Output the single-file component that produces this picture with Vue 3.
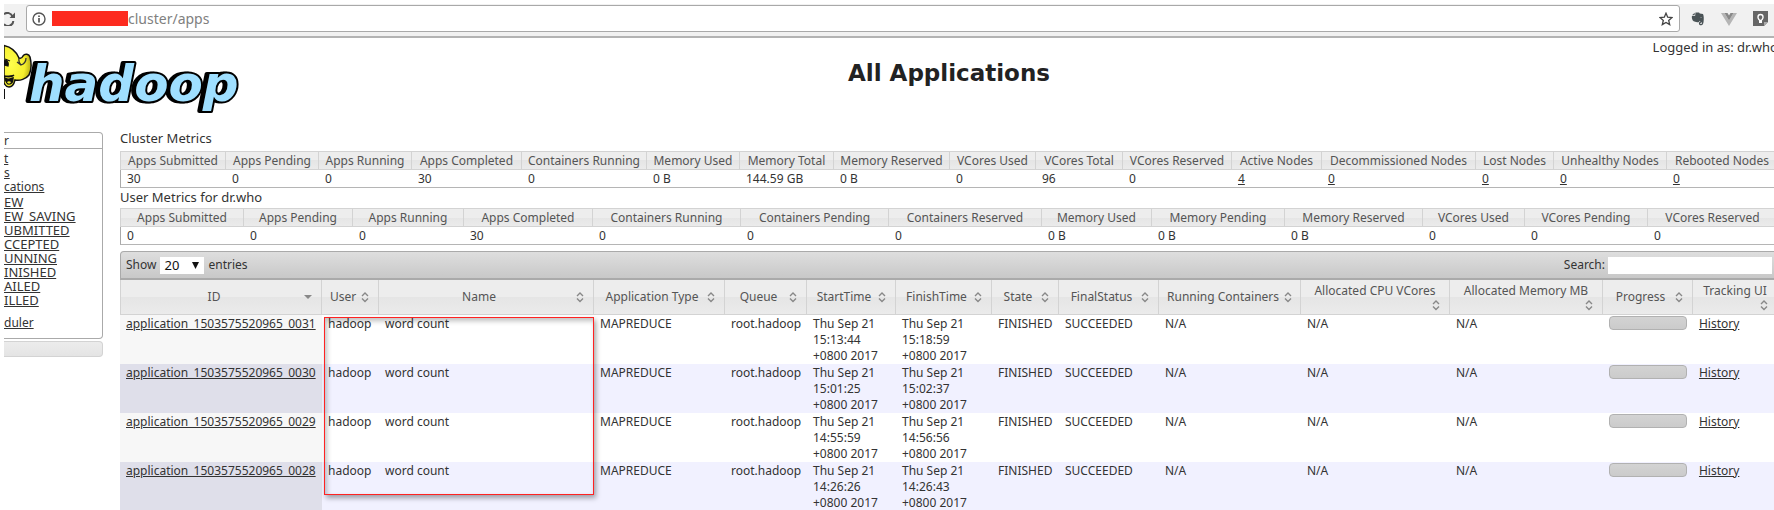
<script setup>
import { ref } from 'vue'

const address = ref('cluster/apps')
const pageSize = ref('20')
const search = ref('')

const nav = [
  { id: 'about', text: 't', kind: 'main' },
  { id: 'nodes', text: 's', kind: 'main' },
  { id: 'apps', text: 'cations', kind: 'main' },
  { id: 'new', text: 'EW', kind: 'state' },
  { id: 'saving', text: 'EW_SAVING', kind: 'state' },
  { id: 'submitted', text: 'UBMITTED', kind: 'state' },
  { id: 'accepted', text: 'CCEPTED', kind: 'state' },
  { id: 'running', text: 'UNNING', kind: 'state' },
  { id: 'finished', text: 'INISHED', kind: 'state' },
  { id: 'failed', text: 'AILED', kind: 'state' },
  { id: 'killed', text: 'ILLED', kind: 'state' },
  { id: 'scheduler', text: 'duler', kind: 'last' },
]

const metrics = [
  {
    title: 'Cluster Metrics',
    columns: [
      ['Apps Submitted', '30', 106],
      ['Apps Pending', '0', 93],
      ['Apps Running', '0', 93],
      ['Apps Completed', '30', 110],
      ['Containers Running', '0', 125],
      ['Memory Used', '0 B', 93],
      ['Memory Total', '144.59 GB', 94],
      ['Memory Reserved', '0 B', 116],
      ['VCores Used', '0', 86],
      ['VCores Total', '96', 87],
      ['VCores Reserved', '0', 109],
      ['Active Nodes', '4', 90, true],
      ['Decommissioned Nodes', '0', 154, true],
      ['Lost Nodes', '0', 78, true],
      ['Unhealthy Nodes', '0', 113, true],
      ['Rebooted Nodes', '0', 111, true],
    ],
  },
  {
    title: 'User Metrics for dr.who',
    columns: [
      ['Apps Submitted', '0', 124],
      ['Apps Pending', '0', 109],
      ['Apps Running', '0', 111],
      ['Apps Completed', '30', 129],
      ['Containers Running', '0', 148],
      ['Containers Pending', '0', 148],
      ['Containers Reserved', '0', 153],
      ['Memory Used', '0 B', 110],
      ['Memory Pending', '0 B', 133],
      ['Memory Reserved', '0 B', 138],
      ['VCores Used', '0', 102],
      ['VCores Pending', '0', 123],
      ['VCores Reserved', '0', 130],
    ],
  },
]

const columns = [
  { label: 'ID', width: 202, sorted: true },
  { label: 'User', width: 57 },
  { label: 'Name', width: 215 },
  { label: 'Application Type', width: 131 },
  { label: 'Queue', width: 82 },
  { label: 'StartTime', width: 89 },
  { label: 'FinishTime', width: 96 },
  { label: 'State', width: 67 },
  { label: 'FinalStatus', width: 100 },
  { label: 'Running Containers', width: 142 },
  { label: 'Allocated CPU VCores', width: 149, stacked: true },
  { label: 'Allocated Memory MB', width: 153, stacked: true },
  { label: 'Progress', width: 90 },
  { label: 'Tracking UI', width: 85, stacked: true },
]

const apps = [
  { id: 'application_1503575520965_0031', start: '15:13:44', finish: '15:18:59' },
  { id: 'application_1503575520965_0030', start: '15:01:25', finish: '15:02:37' },
  { id: 'application_1503575520965_0029', start: '14:55:59', finish: '14:56:56' },
  { id: 'application_1503575520965_0028', start: '14:26:26', finish: '14:26:43' },
]

const total = 1658
const share = (w) => ({ width: (w / total) * 100 + '%' })
</script>

<template>
  <div class="window">
    <div class="browser">
      <button class="reload" aria-label="Reload">
        <svg viewBox="0 0 12 14" width="12" height="14">
          <path d="M0 2.2A5.2 5.2 0 0 1 8.4 4.6M9.3 9A5.2 5.2 0 0 1 0 12" fill="none" stroke="#555" stroke-width="2" />
          <path d="M11 .5V6H5.5z" fill="#555" />
        </svg>
      </button>
      <div class="address">
        <svg viewBox="0 0 14 14" width="14" height="14">
          <circle cx="7" cy="7" r="6" fill="none" stroke="#555" stroke-width="1.4" />
          <path d="M7 6v4.4M7 3.4v1.7" stroke="#555" stroke-width="1.7" />
        </svg>
        <span class="redacted"></span>
        <input v-model="address" aria-label="Address" />
        <button aria-label="Bookmark">
          <svg viewBox="0 0 14 14" width="14" height="14">
            <path d="M7 1.2l1.7 4 4.3.4-3.3 2.8 1 4.2L7 10.4l-3.7 2.2 1-4.2L1 5.6l4.3-.4z" fill="none" stroke="#444" stroke-width="1.3" />
          </svg>
        </button>
      </div>
      <div class="extensions">
        <svg viewBox="0 0 14 14" width="14" height="14">
          <path d="M4.5.5h3.5l.8.9 3.2.6c.8 1.5 1 4.5.6 7.500-.2 2-.9 3.800-2.500 3.800-1.500 0-2.200-.6-2.200-2 0-1.200.8-1.600 2.200-1.600v1c-.7 0-1 .2-1 .6 0 .5.3.8.9.8.7 0 .9-.7.9-1.700-1.100-.3-1.900-.9-2.200-1.700-.4 1.200-1.200 1.700-2.600 1.500C3.300 9.900 1.500 9.200 1 6.500.8 5.300.8 4.300 1 3.900h3.100z" fill="#4a5356" />
          <path d="M1 3.200L3.700.7v2.500z" fill="#4a5356" />
          <path d="M9.400 5.900c.5-.6 1.200-.5 1.500.2z" fill="#eee" />
        </svg>
        <svg viewBox="0 0 16 14" width="16" height="14">
          <path d="M0 1h3.500L8 8.500 12.500 1H16L8 14z" fill="#b5b5b5" />
          <path d="M3.500 1h3L8 3.500 9.500 1h3L8 8.500z" fill="#888" />
        </svg>
        <svg viewBox="0 0 15 15" width="15" height="15">
          <path d="M0 0h15v11l-4 4H0z" fill="#666" />
          <path d="M11 15v-4h4z" fill="#aaa" />
          <path d="M6 9.500C4.800 8.300 4.300 7.500 4.300 6a3.200 3.200 0 0 1 6.400 0c0 1.500-.5 2.300-1.700 3.500V12H6z" fill="#fff" />
          <path d="M7 8.800C6 7.700 5.700 7 5.700 6a1.800 1.800 0 0 1 3.600 0c0 1-.3 1.700-1.300 2.800z" fill="#666" />
        </svg>
      </div>
    </div>

    <header class="banner">
      <svg class="logo" viewBox="0 0 240 80" width="240" height="80" role="img" aria-label="hadoop">
        <defs>
          <radialGradient id="skin" cx="25%" cy="45%" r="75%">
            <stop offset="0" stop-color="#ffff4d" />
            <stop offset=".7" stop-color="#f5ee2c" />
            <stop offset="1" stop-color="#b5ac16" />
          </radialGradient>
        </defs>
        <path d="M0 7.500C7 9 12 13 15 20c2 1 3 0 4-2 2-3 6-2 7 1 1.500 6 1.500 13-1 18-3 4-9 6-14 5-1 4-3 7-6 7-2 0-4-2-5-4z" fill="url(#skin)" stroke="#111" stroke-width="1.500" />
        <path d="M15 20c-.5 3 0 5 2 7M22 20c0 3-2 6-5 7l-4-3" fill="none" stroke="#333" stroke-width="1.300" />
        <path d="M1 21l5 2M0 23c3-1 5 1 4 5l-4-1z" fill="#111" stroke="#111" stroke-width="1.200" />
        <path d="M0 38c4 1 8 1 10-1M1 40c3 2 6 1 8 0 0 4-2 6-4 6s-3-2-4-6z" fill="#111" stroke="#111" stroke-width="1.500" />
        <path d="M3 44c1-1 3-1 4 0-1 2-3 2-4 0z" fill="#f5ee2c" />
        <path d="M0 51v10" stroke="#111" stroke-width="2" />
        <text class="wordmark" x="25" y="63">hadoop</text>
      </svg>
      <div class="heading">
        <p class="login">Logged in as: dr.who</p>
        <h1>All Applications</h1>
      </div>
    </header>

    <div class="layout">
      <aside>
        <nav>
          <h2>r</h2>
          <ul>
            <li v-for="n in nav" :key="n.id" :class="n.kind"><a href="#">{{ n.text }}</a></li>
          </ul>
        </nav>
        <div class="collapsed"></div>
      </aside>

      <main>
        <section v-for="m in metrics" :key="m.title" class="metrics">
          <table>
            <caption>{{ m.title }}</caption>
            <colgroup>
              <col v-for="c in m.columns" :key="c[0]" :style="share(c[2])" />
            </colgroup>
            <thead>
              <tr><th v-for="c in m.columns" :key="c[0]" scope="col">{{ c[0] }}</th></tr>
            </thead>
            <tbody>
              <tr>
                <td v-for="c in m.columns" :key="c[0]">
                  <a v-if="c[3]" href="#">{{ c[1] }}</a>
                  <template v-else>{{ c[1] }}</template>
                </td>
              </tr>
            </tbody>
          </table>
        </section>

        <section class="apps">
          <div class="controls">
            <label class="length">
              Show
              <span class="picker">
                <select v-model="pageSize">
                  <option>20</option>
                  <option>40</option>
                </select>
                <svg viewBox="0 0 7 7" width="7" height="7"><path d="M0 0h7L3.500 7z" fill="#111" /></svg>
              </span>
              entries
            </label>
            <label class="search">Search:<input v-model="search" type="text" /></label>
          </div>
          <table>
            <colgroup>
              <col v-for="c in columns" :key="c.label" :style="share(c.width)" />
            </colgroup>
            <thead>
              <tr>
                <th v-for="c in columns" :key="c.label" scope="col">
                  <div class="sorter" :class="{ stacked: c.stacked }">
                    <span>{{ c.label }}</span>
                    <svg viewBox="0 0 10 12" width="10" height="12">
                      <path v-if="c.sorted" d="M1 4h8L5 8z" fill="#888" />
                      <path v-else d="M2 5l3-3 3 3M2 7.500l3 3 3-3" fill="none" stroke="#888" stroke-width="1.400" />
                    </svg>
                  </div>
                </th>
              </tr>
            </thead>
            <tbody>
              <tr v-for="a in apps" :key="a.id">
                <td><a href="#">{{ a.id }}</a></td>
                <td>hadoop</td>
                <td>word count</td>
                <td>MAPREDUCE</td>
                <td>root.hadoop</td>
                <td>Thu Sep 21<br />{{ a.start }}<br />+0800 2017</td>
                <td>Thu Sep 21<br />{{ a.finish }}<br />+0800 2017</td>
                <td>FINISHED</td>
                <td>SUCCEEDED</td>
                <td>N/A</td>
                <td>N/A</td>
                <td>N/A</td>
                <td><div class="bar"></div></td>
                <td><a href="#">History</a></td>
              </tr>
            </tbody>
          </table>
          <div class="highlight"></div>
        </section>
      </main>
    </div>
  </div>
</template>

<style>
body {
  margin: 0;
  background: #fff;
  overflow: hidden;
}
</style>

<style scoped>
.window {
  padding: 4px 0 0 4px;
  overflow: hidden;
  font-family: "Noto Sans", "Open Sans", sans-serif;
  font-size: 12px;
  line-height: 16px;
  color: #333;
}
svg {
  display: block;
  flex: none;
}
button {
  padding: 0;
  border: 0;
  background: none;
}
a {
  color: #333;
  text-decoration: underline;
}
.browser {
  display: flex;
  align-items: center;
  padding: 1px 0 4px;
  background: #f1f1f1;
  border-bottom: 2px solid #b3b3b3;
}
.reload {
  width: 22px;
}
.address {
  flex: 1;
  display: flex;
  align-items: center;
  box-sizing: border-box;
  height: 27px;
  padding: 0 6px 0 5px;
  background: #fff;
  border: 1px solid #a9a9a9;
  border-radius: 3px;
}
.redacted {
  width: 76px;
  height: 15px;
  margin-left: 6px;
  background: #fd2b1f;
}
.address input {
  flex: 1;
  min-width: 0;
  padding: 0;
  border: 0;
  outline: 0;
  background: none;
  font: 14px/20px "Noto Sans", sans-serif;
  color: #808080;
}
.extensions {
  display: flex;
  align-items: center;
  gap: 16px;
  padding: 0 6px 0 11px;
}
.banner {
  display: grid;
  grid-template-columns: 116px 1fr;
  height: 82px;
}
.logo {
  overflow: hidden;
}
.wordmark {
  font: italic bold 50px "DejaVu Sans", Verdana, sans-serif;
  fill: #9fdfff;
  stroke: #000;
  stroke-width: 4px;
  stroke-linejoin: round;
  paint-order: stroke;
  filter: drop-shadow(-3px 0 0 #000);
}
.heading,
main {
  margin-right: -4px;
}
.login {
  margin: 0;
  text-align: right;
  font-size: 13px;
  line-height: 18px;
}
h1 {
  margin: 5px 0 0;
  text-align: center;
  font: bold 23px/24px "DejaVu Sans", Verdana, sans-serif;
  color: #222;
}
.layout {
  display: grid;
  grid-template-columns: 99px 1fr;
  column-gap: 17px;
  align-items: start;
}
aside {
  padding-top: 12px;
}
nav {
  border: 1px solid #aaa;
  border-left: 0;
  border-radius: 0 4px 4px 0;
}
h2 {
  margin: 0;
  border-bottom: 1px solid #aaa;
  font-size: 12px;
  font-weight: normal;
  line-height: 15px;
}
nav ul {
  margin: 0;
  padding: 3px 0 8px;
  list-style: none;
  line-height: 14px;
}
nav .state {
  font-size: 13px;
}
nav .main + .state {
  padding-top: 1px;
}
nav .last {
  padding-top: 9px;
}
.collapsed {
  height: 14px;
  margin-top: 2px;
  border: 1px solid #d3d3d3;
  border-left: 0;
  border-radius: 0 4px 4px 0;
  background: linear-gradient(#ececec, #e4e4e4);
}
table {
  width: 100%;
  table-layout: fixed;
  border-collapse: separate;
  border-spacing: 0;
}
th {
  box-sizing: border-box;
  padding: 0;
  border: 1px solid #d3d3d3;
  border-left-width: 0;
  background: linear-gradient(#ededed 50%, #e5e5e5 50%, #ebebeb);
  font-weight: normal;
  color: #555;
  white-space: nowrap;
}
th:first-child {
  border-left-width: 1px;
}
.metrics caption {
  height: 20px;
  text-align: left;
  font-size: 13px;
  line-height: 18px;
}
.metrics:first-child caption {
  padding: 9px 0 2px;
}
.metrics th {
  height: 19px;
}
.metrics td {
  box-sizing: border-box;
  height: 18px;
  padding: 1px 0 0 6px;
  border-bottom: 1px solid #b5b5b5;
}
.metrics td:first-child {
  border-left: 1px solid #aaa;
}
.apps {
  position: relative;
  margin-top: 6px;
}
.controls {
  display: flex;
  align-items: center;
  justify-content: space-between;
  box-sizing: border-box;
  height: 29px;
  padding: 0 5px;
  border: 1px solid #aaa;
  border-bottom-width: 2px;
  border-radius: 4px 4px 0 0;
  background: linear-gradient(#dedede, #c8c8c8);
}
.length,
.search {
  display: flex;
  align-items: center;
  gap: 3px;
}
.length {
  gap: 4px;
}
.picker {
  position: relative;
}
.picker select {
  display: block;
  appearance: none;
  width: 44px;
  height: 17px;
  padding: 0 0 0 4px;
  border: 0;
  border-radius: 0;
  background: #fff;
  font: 13px/17px "Noto Sans", sans-serif;
  color: #111;
}
.picker svg {
  position: absolute;
  top: 5px;
  right: 5px;
  pointer-events: none;
}
.search input {
  box-sizing: border-box;
  width: 164px;
  height: 17px;
  padding: 0 2px;
  border: 0;
  background: #fff;
  font: 12px "Noto Sans", sans-serif;
}
.apps th {
  height: 35px;
  border-top-width: 0;
}
.sorter {
  display: flex;
  align-items: center;
  gap: 4px;
  padding: 0 8px;
}
.sorter span {
  flex: 1;
}
.sorter.stacked {
  flex-direction: column;
  align-items: stretch;
  gap: 0;
}
.sorter.stacked svg {
  align-self: flex-end;
}
.apps td {
  padding: 1px 0 0 6px;
  vertical-align: top;
  white-space: nowrap;
}
.apps td:first-child {
  background: #f7f7f7;
}
.apps tr:nth-child(even) td {
  background: #f1f1ff;
}
.apps tr:nth-child(even) td:first-child {
  background: #dfdfea;
}
.bar {
  box-sizing: border-box;
  height: 14px;
  margin-right: 6px;
  border: 1px solid #b1b1b1;
  border-radius: 4px;
  background: linear-gradient(#d3d3d3, #cbcbcb);
}
.highlight {
  position: absolute;
  top: 66px;
  left: 12.3%;
  box-sizing: border-box;
  width: 16.3%;
  height: 178px;
  border: 1px solid #f22;
  box-shadow: 2px 3px 5px rgba(0, 0, 0, 0.35), inset 2px 3px 5px rgba(0, 0, 0, 0.25);
  pointer-events: none;
}
</style>
